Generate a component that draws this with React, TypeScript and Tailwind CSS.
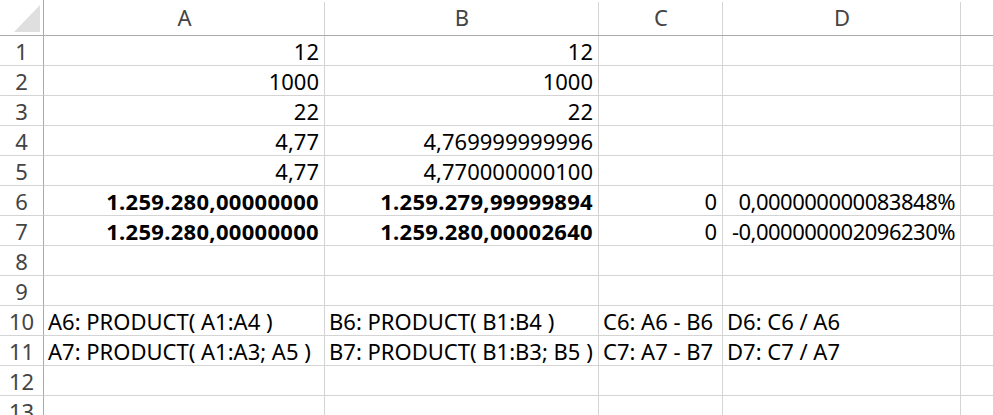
import React from "react";

type Cell = { t: string; align?: "l" | "r"; bold?: boolean; tight?: boolean };

const cols = ["A", "B", "C", "D", ""];

const data: Record<number, Cell[]> = {
  1: [{ t: "12", align: "r" }, { t: "12", align: "r" }],
  2: [{ t: "1000", align: "r" }, { t: "1000", align: "r" }],
  3: [{ t: "22", align: "r" }, { t: "22", align: "r" }],
  4: [{ t: "4,77", align: "r" }, { t: "4,769999999996", align: "r" }],
  5: [{ t: "4,77", align: "r" }, { t: "4,770000000100", align: "r" }],
  6: [
    { t: "1.259.280,00000000", align: "r", bold: true },
    { t: "1.259.279,99999894", align: "r", bold: true },
    { t: "0", align: "r" },
    { t: "0,000000000083848%", align: "r", tight: true },
  ],
  7: [
    { t: "1.259.280,00000000", align: "r", bold: true },
    { t: "1.259.280,00002640", align: "r", bold: true },
    { t: "0", align: "r" },
    { t: "-0,000000002096230%", align: "r", tight: true },
  ],
  10: [
    { t: "A6: PRODUCT( A1:A4 )" },
    { t: "B6: PRODUCT( B1:B4 )" },
    { t: "C6: A6 - B6" },
    { t: "D6: C6 / A6" },
  ],
  11: [
    { t: "A7: PRODUCT( A1:A3; A5 )" },
    { t: "B7: PRODUCT( B1:B3; B5 )" },
    { t: "C7: A7 - B7" },
    { t: "D7: C7 / A7" },
  ],
};

export default function App() {
  const rows = Array.from({ length: 13 }, (_, i) => i + 1);
  return (
    <div
      className="w-[993px] h-[415px] overflow-hidden bg-white text-black"
      style={{ fontFamily: '"Noto Sans", "Open Sans", sans-serif' }}
    >
      <div className="grid grid-cols-[44px_281px_274px_124px_238px_200px] w-[1161px]">
        {/* header row */}
        <div className="h-[36px] border-b border-r border-b-[#ababab] border-r-[#ababab] relative">
          <svg className="absolute left-[14px] top-[5px]" width="27" height="27" viewBox="0 0 27 27">
            <polygon points="26,0 26,27 0,27" fill="#dfdfdf" />
          </svg>
        </div>
        {cols.map((c, i) => (
          <div
            key={i}
            className="h-[36px] border-b border-b-[#ababab] flex items-center justify-center text-[22px] text-[#444] relative"
          >
            <span className="leading-none pb-[1px]">{c}</span>
            <div className="absolute right-0 top-[2px] bottom-0 w-px bg-[#d4d4d4]" />
          </div>
        ))}
        {rows.map((r) => (
          <React.Fragment key={r}>
            <div className="h-[30px] border-b border-r border-b-[#d4d4d4] border-r-[#ababab] flex items-center justify-center text-[22px] text-[#444]">
              <span className="leading-none">{r}</span>
            </div>
            {cols.map((_, ci) => {
              const cell = data[r]?.[ci];
              return (
                <div
                  key={ci}
                  className={`h-[30px] border-b border-r border-[#d4d4d4] flex items-center text-[22px] whitespace-nowrap ${
                    cell?.align === "r" ? "justify-end pr-[5px]" : "justify-start pl-[4px]"
                  } ${cell?.bold ? "font-bold tracking-[0.3px]" : ""} ${cell?.tight ? "tracking-[-0.5px]" : ""}`}
                >
                  {cell ? <span className="leading-none">{cell.t}</span> : null}
                </div>
              );
            })}
          </React.Fragment>
        ))}
      </div>
    </div>
  );
}
